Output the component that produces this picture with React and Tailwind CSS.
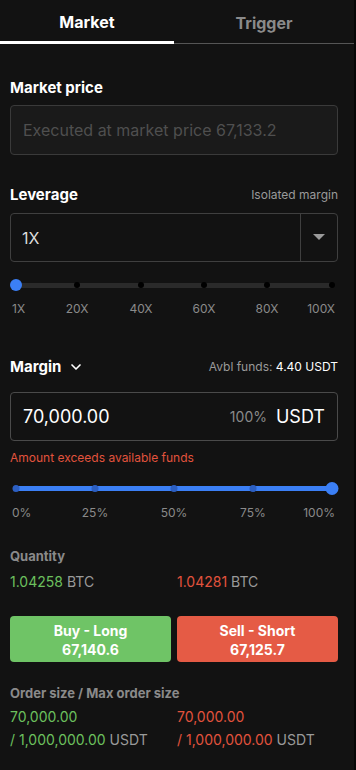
import { ChevronDown } from "lucide-react";

const levDots = [16, 77, 141, 204, 267, 332];
const levLabels = ["1X", "20X", "40X", "60X", "80X", "100X"];
const pctDots = [16, 95, 174, 253, 332];
const pctLabels = ["0%", "25%", "50%", "75%", "100%"];

function Labels({ dots, labels }) {
  return (
    <div className="relative h-4 mt-[10px] text-[12px] leading-4 text-[#8a8a8a]">
      {labels.map((l, i) => {
        const x = dots[i] - 10;
        if (i === 0) return <span key={l} className="absolute left-[2px] top-0">{l}</span>;
        if (i === labels.length - 1) return <span key={l} className="absolute right-[3px] top-0">{l}</span>;
        return (
          <span key={l} className="absolute top-0 -translate-x-1/2" style={{ left: x }}>
            {l}
          </span>
        );
      })}
    </div>
  );
}

export default function App() {
  return (
    <div className="w-[356px] h-[770px] bg-[#121212] border-r-2 border-[#070707] font-['Inter','Liberation_Sans',sans-serif] text-white overflow-hidden">
      <div className="flex h-[44px]">
        <div className="w-[174px] flex items-center justify-center border-b-[3px] border-white text-[16px] font-bold pt-[3px]">
          Market
        </div>
        <div className="flex-1 flex items-center justify-center border-b border-[#555] text-[16px] font-bold text-[#8a8a8a] pt-[3px]">
          Trigger
        </div>
      </div>

      <div className="pl-[10px] pr-[16px]">
        <div className="mt-[34px] text-[15px] leading-5 font-bold">Market price</div>
        <div className="mt-[7px] h-[50px] rounded border border-[#3a3a3a] bg-[#1a1a1a] flex items-center px-[12px] text-[16px] text-[#4f4f4f]">
          Executed at market price 67,133.2
        </div>

        <div className="mt-[30px] flex items-center justify-between">
          <span className="text-[15px] leading-5 font-bold">Leverage</span>
          <span className="text-[12px] text-[#9a9a9a]">Isolated margin</span>
        </div>
        <div className="mt-[8px] h-[49px] rounded border border-[#3f3f3f] flex">
          <div className="flex-1 flex items-center px-[11px] text-[16px] text-[#dcdcdc]">1X</div>
          <div className="w-[37px] border-l border-[#3f3f3f] flex items-center justify-center">
            <svg width="12" height="7" viewBox="0 0 12 7">
              <path d="M0 0h12L6 6z" fill="#9a9a9a" />
            </svg>
          </div>
        </div>

        <div className="relative h-[12px] mt-[17px]">
          <div className="absolute left-[6px] right-[6px] top-[4px] h-[5px] rounded-full bg-[#2a2a2a]" />
          {levDots.map((d, i) =>
            i === 0 ? (
              <div key={d} className="absolute top-0 w-[12px] h-[12px] rounded-full bg-[#3b7ff5] -translate-x-1/2" style={{ left: d - 10 }} />
            ) : (
              <div key={d} className="absolute top-[3px] w-[6px] h-[6px] rounded-full bg-black -translate-x-1/2" style={{ left: d - 10 }} />
            )
          )}
        </div>
        <Labels dots={levDots} labels={levLabels} />

        <div className="mt-[40px] flex items-center justify-between">
          <span className="flex items-center gap-[7px] text-[15px] leading-5 font-bold">
            Margin <ChevronDown size={16} strokeWidth={2.5} />
          </span>
          <span className="text-[12px] text-[#9a9a9a]">
            Avbl funds: <span className="text-white">4.40 USDT</span>
          </span>
        </div>
        <div className="mt-[15px] h-[49px] rounded border border-[#4a4a4a] flex items-center px-[12px]">
          <span className="flex-1 text-[18px]">70,000.00</span>
          <span className="text-[14px] text-[#8a8a8a] mr-[9px]">100%</span>
          <span className="text-[18px]">USDT</span>
        </div>
        <div className="mt-[9px] text-[12px] leading-4 text-[#e2533d]">Amount exceeds available funds</div>

        <div className="relative h-[13px] mt-[16px]">
          <div className="absolute left-[6px] right-[6px] top-[4px] h-[5px] rounded-full bg-[#3b7ff5]" />
          {pctDots.map((d, i) =>
            i === pctDots.length - 1 ? (
              <div key={d} className="absolute top-0 w-[13px] h-[13px] rounded-full bg-[#3b7ff5] -translate-x-1/2" style={{ left: d - 10 }} />
            ) : (
              <div key={d} className="absolute top-[3px] w-[7px] h-[7px] rounded-full bg-[#2c5fc2] -translate-x-1/2" style={{ left: d - 10 }} />
            )
          )}
        </div>
        <Labels dots={pctDots} labels={pctLabels} />

        <div className="mt-[27px] text-[13px] leading-4 font-bold text-[#8a8a8a]">Quantity</div>
        <div className="mt-[8px] grid grid-cols-2 gap-[6px] text-[14px] leading-5">
          <span className="text-[#6cc05e]">
            1.04258 <span className="text-[#9a9a9a]">BTC</span>
          </span>
          <span className="text-[#e2533d]">
            1.04281 <span className="text-[#9a9a9a]">BTC</span>
          </span>
        </div>

        <div className="mt-[24px] grid grid-cols-2 gap-[6px]">
          <button className="h-[46px] rounded bg-[#6fc466] flex flex-col items-center justify-center pt-[2px] text-[14px] leading-[19px] font-bold">
            <span>Buy - Long</span>
            <span>67,140.6</span>
          </button>
          <button className="h-[46px] rounded bg-[#e55b45] flex flex-col items-center justify-center pt-[2px] text-[14px] leading-[19px] font-bold">
            <span>Sell - Short</span>
            <span>67,125.7</span>
          </button>
        </div>

        <div className="mt-[23px] text-[13px] leading-4 font-bold text-[#8a8a8a]">Order size / Max order size</div>
        <div className="mt-[4px] grid grid-cols-2 gap-[6px] text-[14px] leading-[23px]">
          <div className="text-[#6cc05e]">
            <div>70,000.00</div>
            <div>
              / 1,000,000.00 <span className="text-[#9a9a9a]">USDT</span>
            </div>
          </div>
          <div className="text-[#e2533d]">
            <div>70,000.00</div>
            <div>
              / 1,000,000.00 <span className="text-[#9a9a9a]">USDT</span>
            </div>
          </div>
        </div>
      </div>
    </div>
  );
}
